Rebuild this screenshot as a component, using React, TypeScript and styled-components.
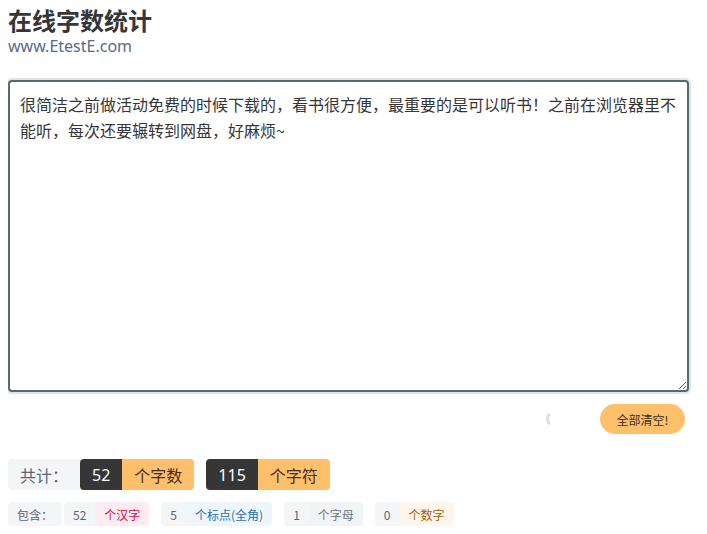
import styled, { createGlobalStyle } from 'styled-components';

const GlobalStyle = createGlobalStyle`
    body {
        margin: 8px;
        font-family: 'Noto Sans', 'Noto Sans CJK SC', sans-serif;
        color: #363636;
        background: #fff;
    }
`;

const TEXT =
    '很简洁之前做活动免费的时候下载的，看书很方便，最重要的是可以听书！之前在浏览器里不能听，每次还要辗转到网盘，好麻烦~';

type Tone = 'plain' | 'danger' | 'info' | 'muted' | 'warning';

const toneColors: Record<Tone, { bg: string; fg: string }> = {
    plain: { bg: '#f4f5f6', fg: '#5b6478' },
    danger: { bg: '#feecf0', fg: '#d10f42' },
    info: { bg: '#eef6fc', fg: '#1f6fae' },
    muted: { bg: '#f1f3f5', fg: '#6b7785' },
    warning: { bg: '#fef6ea', fg: '#a0620a' },
};

export default function App() {
    return (
        <Page>
            <GlobalStyle />
            <Header>
                <Title>在线字数统计</Title>
                <Subtitle>www.EtestE.com</Subtitle>
            </Header>

            <Editor defaultValue={TEXT} autoFocus spellCheck={false} />

            <Actions>
                <Spinner />
                <ClearButton>全部清空!</ClearButton>
            </Actions>

            <TotalRow>
                <TotalLabel>共计：</TotalLabel>
                <Group>
                    <Count>52</Count>
                    <Unit>个字数</Unit>
                </Group>
                <Group>
                    <Count>115</Count>
                    <Unit>个字符</Unit>
                </Group>
            </TotalRow>

            <DetailRow>
                <SmallTag tone="plain">包含：</SmallTag>
                <Group>
                    <SmallTag tone="plain">52</SmallTag>
                    <SmallTag tone="danger">个汉字</SmallTag>
                </Group>
                <Group>
                    <SmallTag tone="plain">5</SmallTag>
                    <SmallTag tone="info">个标点(全角)</SmallTag>
                </Group>
                <Group>
                    <SmallTag tone="plain">1</SmallTag>
                    <SmallTag tone="muted">个字母</SmallTag>
                </Group>
                <Group>
                    <SmallTag tone="plain">0</SmallTag>
                    <SmallTag tone="warning">个数字</SmallTag>
                </Group>
            </DetailRow>
        </Page>
    );
}

const Page = styled.div`
    width: 681px;
    display: flex;
    flex-direction: column;
`;

const Header = styled.header`
    display: flex;
    flex-direction: column;
`;

const Title = styled.h1`
    margin: 0;
    font-size: 24px;
    line-height: 26px;
    font-weight: 700;
    color: #363636;
`;

const Subtitle = styled.div`
    font-size: 16px;
    line-height: 24px;
    color: #5a6a88;
`;

const Editor = styled.textarea`
    margin-top: 22px;
    box-sizing: border-box;
    width: 681px;
    height: 312px;
    padding: 9px 8px 9px 10px;
    border: 2px solid #526a70;
    border-radius: 4px;
    box-shadow: 0 0 0 2px #dfe5e7;
    outline: none;
    resize: vertical;
    font-family: 'Noto Sans CJK SC', 'Noto Sans', sans-serif;
    font-size: 16px;
    line-height: 26px;
    color: #363636;
    caret-color: #363636;
`;

const Actions = styled.div`
    margin-top: 12px;
    padding-right: 4px;
    display: flex;
    align-items: center;
    justify-content: flex-end;
    gap: 36px;
`;

const Spinner = styled.span`
    box-sizing: border-box;
    width: 18px;
    height: 18px;
    border-radius: 50%;
    border: 3px solid transparent;
    border-left-color: #dedede;
`;

const ClearButton = styled.button`
    height: 30px;
    width: 85px;
    padding: 0;
    border: none;
    border-radius: 15px;
    background: #ffc06b;
    color: #3a3026;
    font-family: 'Noto Sans CJK SC', sans-serif;
    font-size: 12px;
    cursor: pointer;
`;

const TotalRow = styled.div`
    margin-top: 25px;
    display: flex;
    align-items: center;
    gap: 12px;
`;

const Group = styled.div`
    display: flex;

    & > *:first-child {
        border-top-right-radius: 0;
        border-bottom-right-radius: 0;
    }
    & > *:last-child {
        border-top-left-radius: 0;
        border-bottom-left-radius: 0;
    }
`;

const BigTag = styled.span`
    height: 31px;
    display: inline-flex;
    align-items: center;
    justify-content: center;
    padding: 0 12px;
    border-radius: 4px;
    font-family: 'Noto Sans CJK SC', sans-serif;
    font-size: 16px;
`;

const TotalLabel = styled(BigTag)`
    width: 72px;
    box-sizing: border-box;
    background: #f4f5f6;
    color: #5b6478;
    margin-right: -12px;
    border-top-right-radius: 0;
    border-bottom-right-radius: 0;
`;

const Count = styled(BigTag)`
    background: #363636;
    color: #fff;
    font-family: 'Noto Sans', sans-serif;
`;

const Unit = styled(BigTag)`
    background: #ffbf6b;
    color: #3d3025;
`;

const DetailRow = styled.div`
    margin-top: 12px;
    display: flex;
    align-items: center;
    gap: 12px;

    & > *:first-child {
        margin-right: -10px;
    }
`;

const SmallTag = styled.span<{ tone: Tone }>`
    height: 24px;
    display: inline-flex;
    align-items: center;
    padding: 0 9px;
    border-radius: 4px;
    font-family: 'Noto Sans CJK SC', sans-serif;
    font-size: 12px;
    background: ${({ tone }) => toneColors[tone].bg};
    color: ${({ tone }) => toneColors[tone].fg};
`;
